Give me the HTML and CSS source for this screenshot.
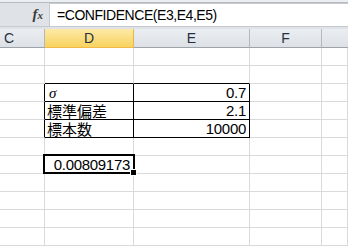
FILE: index.html
```
<!DOCTYPE html>
<html lang="ja">
<head>
    <meta charset="UTF-8">
    <title>CONFIDENCE</title>
    <link rel="stylesheet" href="styles.css">
</head>
<body>
    <div class="top-band"></div>

    <div class="formula-bar">
        <div class="fx-box"><span class="fx">f<span class="fx-x">x</span></span></div>
        <div class="formula-input">=CONFIDENCE(E3,E4,E5)</div>
    </div>
    <div class="bar-gap"></div>

    <div class="sheet">
        <div class="head">C</div>
        <div class="head head-active">D</div>
        <div class="head">E</div>
        <div class="head">F</div>
        <div class="head head-last"></div>

        <!-- row 1 -->
        <div class="cell"></div><div class="cell"></div><div class="cell"></div><div class="cell"></div><div class="cell"></div>
        <!-- row 2 -->
        <div class="cell"></div><div class="cell b-bottom"></div><div class="cell b-bottom"></div><div class="cell"></div><div class="cell"></div>
        <!-- row 3 -->
        <div class="cell b-right"></div><div class="cell boxed label"><span class="sigma">σ</span></div><div class="cell boxed num">0.7</div><div class="cell"></div><div class="cell"></div>
        <!-- row 4 -->
        <div class="cell b-right"></div><div class="cell boxed label"><span class="cjk">標準偏差</span></div><div class="cell boxed num">2.1</div><div class="cell"></div><div class="cell"></div>
        <!-- row 5 -->
        <div class="cell b-right"></div><div class="cell boxed label"><span class="cjk">標本数</span></div><div class="cell boxed num">10000</div><div class="cell"></div><div class="cell"></div>
        <!-- row 6 -->
        <div class="cell"></div><div class="cell"></div><div class="cell"></div><div class="cell"></div><div class="cell"></div>
        <!-- row 7 -->
        <div class="cell"></div><div class="cell num selected">0.00809173</div><div class="cell"></div><div class="cell"></div><div class="cell"></div>
        <!-- rows 8-11 -->
        <div class="cell"></div><div class="cell"></div><div class="cell"></div><div class="cell"></div><div class="cell"></div>
        <div class="cell"></div><div class="cell"></div><div class="cell"></div><div class="cell"></div><div class="cell"></div>
        <div class="cell"></div><div class="cell"></div><div class="cell"></div><div class="cell"></div><div class="cell"></div>
        <div class="cell"></div><div class="cell"></div><div class="cell"></div><div class="cell"></div><div class="cell"></div>
    </div>
</body>
</html>
```

FILE: styles.css
```
html {
    overflow: hidden;
}

body {
    margin: 0;
    width: 348px;
    height: 251px;
    overflow: hidden;
    background-color: #ffffff;
    font-family: "Liberation Sans", "Noto Sans CJK JP", sans-serif;
    color: #000000;
}

.top-band {
    height: 2px;
    background-color: #eceef1;
    border-bottom: 1px solid #b6bbc2;
}

.formula-bar {
    display: flex;
    height: 23px;
    background-color: #dfe3e8;
}

.fx-box {
    width: 49px;
    display: flex;
    justify-content: flex-end;
    align-items: center;
    padding-right: 6px;
    box-sizing: border-box;
}

.fx {
    font-family: "Liberation Serif", serif;
    font-style: italic;
    font-weight: bold;
    font-size: 15px;
    color: #3c3c3c;
}

.fx-x {
    font-size: 11px;
}

.formula-input {
    flex: 1;
    background-color: #ffffff;
    border-left: 1px solid #c5cad1;
    border-top: 1px solid #c5cad1;
    padding-left: 7px;
    font-size: 14px;
    line-height: 22px;
    letter-spacing: -0.45px;
    color: #000000;
}

.bar-gap {
    height: 2px;
    background-color: #dfe3e8;
    border-top: 1px solid #c5cad1;
}

.sheet {
    display: grid;
    grid-template-columns: 45px 89px 116px 72px 1fr;
    grid-template-rows: 19px;
    grid-auto-rows: 18px;
}

.head {
    box-sizing: border-box;
    background: linear-gradient(#eaedf1, #dde1e6);
    border-right: 1px solid #b3b8bf;
    border-bottom: 1px solid #9da3ab;
    text-align: center;
    font-size: 14px;
    line-height: 18px;
    color: #27313d;
}

.head:first-child {
    text-align: left;
    padding-left: 4px;
}

.head-active {
    background: linear-gradient(#fde9a6, #f9d35f);
    border-bottom: 1px solid #f2b84a;
    border-right: 1px solid #e7b64a;
}

.head-last {
    border-right: none;
}

.cell {
    box-sizing: border-box;
    border-right: 1px solid #dadada;
    border-bottom: 1px solid #dadada;
    font-size: 15px;
    line-height: 17px;
    white-space: nowrap;
}

.b-bottom {
    border-bottom-color: #000000;
}

.b-right {
    border-right-color: #000000;
}

.boxed {
    border-right-color: #000000;
    border-bottom-color: #000000;
}

.label {
    padding-left: 2px;
}

.cjk {
    display: inline-block;
    font-family: "Noto Sans CJK JP", sans-serif;
    font-size: 15px;
    line-height: 17px;
    height: 17px;
    vertical-align: top;
}

.sigma {
    font-family: "Liberation Serif", serif;
    font-style: italic;
    padding-left: 2px;
}

.num {
    text-align: right;
    padding-right: 3px;
    letter-spacing: -0.3px;
}

.selected {
    position: relative;
}

.selected::after {
    content: "";
    position: absolute;
    top: -2px;
    left: -2px;
    right: -2px;
    bottom: -1px;
    border: 2px solid #000000;
}

.selected::before {
    content: "";
    position: absolute;
    right: -4px;
    bottom: -3px;
    width: 5px;
    height: 5px;
    background-color: #000000;
    border: 1px solid #ffffff;
    z-index: 1;
}
```
